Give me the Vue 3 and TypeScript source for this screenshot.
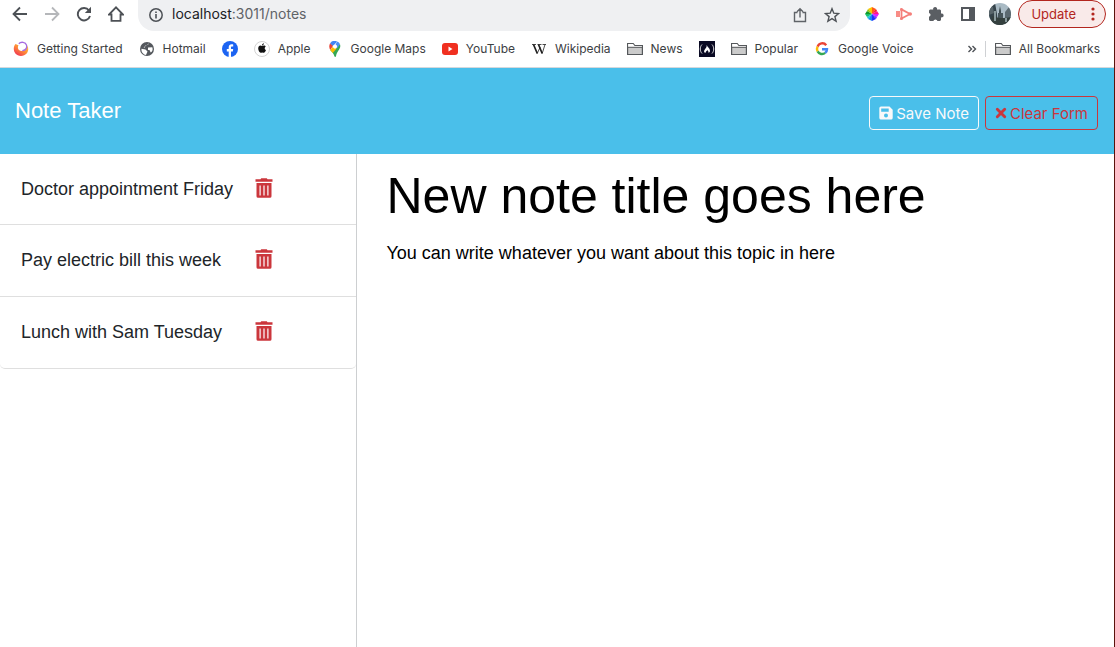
<script setup lang="ts">
import { ref } from 'vue'

interface Bookmark {
  icon: string
  label?: string
  name: string
}

interface Note {
  id: number
  title: string
}

const bookmarks: Bookmark[] = [
  { icon: 'firefox', label: 'Getting Started', name: 'Getting Started' },
  { icon: 'globe', label: 'Hotmail', name: 'Hotmail' },
  { icon: 'facebook', name: 'Facebook' },
  { icon: 'apple', label: 'Apple', name: 'Apple' },
  { icon: 'maps', label: 'Google Maps', name: 'Google Maps' },
  { icon: 'youtube', label: 'YouTube', name: 'YouTube' },
  { icon: 'wikipedia', label: 'Wikipedia', name: 'Wikipedia' },
  { icon: 'folder', label: 'News', name: 'News' },
  { icon: 'camp', name: 'freeCodeCamp' },
  { icon: 'folder', label: 'Popular', name: 'Popular' },
  { icon: 'google', label: 'Google Voice', name: 'Google Voice' },
]

const notes = ref<Note[]>([
  { id: 1, title: 'Doctor appointment Friday' },
  { id: 2, title: 'Pay electric bill this week' },
  { id: 3, title: 'Lunch with Sam Tuesday' },
])

const title = ref('New note title goes here')
const body = ref('You can write whatever you want about this topic in here')

let nextId = 4

function saveNote(): void {
  if (!title.value) return
  notes.value.push({ id: nextId++, title: title.value })
  clearForm()
}

function clearForm(): void {
  title.value = ''
  body.value = ''
}

function removeNote(id: number): void {
  notes.value = notes.value.filter((note) => note.id !== id)
}
</script>

<template>
  <div class="window">
    <div class="toolbar">
      <div class="nav">
        <button type="button" class="icon-button" aria-label="Back">
          <svg width="16" height="16" viewBox="0 0 16 16" fill="none" stroke="#4d5156" stroke-width="1.8"><path d="M15 8H2M8 1.5 1.5 8 8 14.500" /></svg>
        </button>
        <button type="button" class="icon-button" aria-label="Forward">
          <svg width="16" height="16" viewBox="0 0 16 16" fill="none" stroke="#b5b7ba" stroke-width="1.800"><path d="M1 8h13M8 1.500 14.500 8 8 14.500" /></svg>
        </button>
        <button type="button" class="icon-button" aria-label="Reload">
          <svg width="16" height="16" viewBox="0 0 16 16"><path d="M13 4.500A6.200 6.200 0 1 0 14 10" fill="none" stroke="#4d5156" stroke-width="1.900" /><path d="M15 .8v6.200H8.800z" fill="#4d5156" /></svg>
        </button>
        <button type="button" class="icon-button" aria-label="Home">
          <svg width="16" height="16" viewBox="0 0 16 16" fill="none" stroke="#4d5156" stroke-width="1.800"><path d="M1 8.500h2.500v6.400h9V8.500H15L8 1.400z" /></svg>
        </button>
      </div>
      <div class="address">
        <svg width="16" height="16" viewBox="0 0 16 16"><circle cx="8" cy="8" r="6.200" fill="none" stroke="#4d5156" stroke-width="1.500" /><path d="M7.200 7h1.600v4.500H7.200zM7.200 4.400h1.600V6H7.200z" fill="#4d5156" /></svg>
        <span class="url"><span class="host">localhost</span>:3011/notes</span>
        <button type="button" class="icon-button" aria-label="Share">
          <svg width="16" height="16" viewBox="0 0 16 16" fill="none" stroke="#5f6368" stroke-width="1.400"><path d="M5.500 5.500h-3v9h11v-9h-3M8 10.500V2M5 4.700l3-3 3 3" /></svg>
        </button>
        <button type="button" class="icon-button" aria-label="Bookmark this page">
          <svg width="16" height="16" viewBox="0 0 16 16" fill="none" stroke="#4d5156" stroke-width="1.400"><path d="m8 1.700 1.800 4.500 4.800.3-3.700 3.100 1.200 4.700L8 11.700l-4.100 2.600 1.200-4.700-3.700-3.100 4.800-.3z" /></svg>
        </button>
      </div>
      <div class="extensions">
        <button type="button" class="icon-button" aria-label="Color picker">
          <svg width="16" height="16" viewBox="0 0 16 16"><path d="M8 8V1l-4 2z" fill="#ffc400" /><path d="M8 8V1l4 2z" fill="#ff5a18" /><path d="m8 8 4-5 1 2z" fill="#f01830" /><path d="m8 8 5-3 2 3z" fill="#ff1888" /><path d="M8 8h7l-2 3z" fill="#e020ff" /><path d="m8 8 5 3-1 2z" fill="#8828ff" /><path d="m8 8 4 5-4 2z" fill="#2030ff" /><path d="M8 8v7l-4-2z" fill="#1888f0" /><path d="m8 8-4 5-1-2z" fill="#16c8d8" /><path d="m8 8-5 3-2-3z" fill="#18c070" /><path d="M8 8H1l2-3z" fill="#109828" /><path d="M8 8 3 5l1-2z" fill="#90c810" /></svg>
        </button>
        <button type="button" class="icon-button" aria-label="Screen recorder">
          <svg width="16" height="16" viewBox="0 0 16 16"><path d="M0 5h4v6H0z" fill="#f88c86" /><path d="M5.500 3.400 14 8l-8.500 4.600z" fill="none" stroke="#f47f7a" stroke-width="1.800" /><circle cx="5.500" cy="3.500" r="1.500" fill="#f47f7a" /><circle cx="5.500" cy="12.500" r="1.500" fill="#f47f7a" /><circle cx="14.200" cy="8" r="1.800" fill="#f47f7a" /></svg>
        </button>
        <button type="button" class="icon-button" aria-label="Extensions">
          <svg width="16" height="16" viewBox="0 0 16 16"><path d="M1 4.500 2 3.500h3.200a2 2 0 1 1 3.800 0h3l1 1v3a2 2 0 1 1 0 3.800V14l-1 1H9.500a2.200 2.200 0 0 0-4.200 0H2l-1-1v-3.200a2 2 0 0 0 0-3.900z" fill="#5a5e63" /></svg>
        </button>
        <button type="button" class="icon-button" aria-label="Side panel">
          <svg width="16" height="16" viewBox="0 0 16 16"><path fill-rule="evenodd" d="M1 1h14v14H1zM3 3v10h6V3z" fill="#54585d" /></svg>
        </button>
      </div>
      <button type="button" class="icon-button profile" aria-label="Profile">
        <svg width="22" height="22" viewBox="0 0 22 22"><defs><clipPath id="face"><circle cx="11" cy="11" r="11" /></clipPath></defs><g clip-path="url(#face)"><path d="M0 0h22v22H0z" fill="#a9bac4" /><path d="M0 0h6l2 11 1 11H0z" fill="#35434a" /><path d="M0 4h4l1 6-5 2z" fill="#59666b" /><path d="M10 22V8l1-5 1 5v14z" fill="#3d4b50" /><path d="M9 10h5v12H9z" fill="#47555a" /><path d="M16 9l4-5 2 1v17h-6z" fill="#5b6970" /><path d="M3 13c5 2 12 3 19 1v8H2z" fill="#34403e" /><path d="M5 8h2v10H5zM16 15h2v4h-2z" fill="#899a9d" /></g></svg>
      </button>
      <button type="button" class="update">
        <span>Update</span>
        <svg width="4" height="16" viewBox="0 0 4 16" fill="#b3261e"><circle cx="2" cy="3" r="1.600" /><circle cx="2" cy="8" r="1.600" /><circle cx="2" cy="13" r="1.600" /></svg>
      </button>
    </div>

    <nav class="bookmarks" aria-label="Bookmarks">
      <a v-for="mark in bookmarks" :key="mark.name" href="#" class="bookmark" :aria-label="mark.name">
        <svg v-if="mark.icon === 'firefox'" width="16" height="16" viewBox="0 0 16 16"><defs><linearGradient id="flame" x1="1" y1="0" x2="0.200" y2="1"><stop offset="0" stop-color="#ffd24a" /><stop offset="0.500" stop-color="#ff9036" /><stop offset="1" stop-color="#ef2f55" /></linearGradient></defs><path d="M2.500 3C-1 7 .8 15 8 15c6.500 0 8.800-6.500 6.200-10.500C14 8 11.500 10 9 10 5.500 10 4 7 5.500 4.200z" fill="url(#flame)" /><path d="M5.800 2.800C8 .3 12.500.9 13.600 4.300c.7 2.800-1.500 5.300-4.300 5.400" fill="none" stroke="#a56be0" stroke-width="1.300" /></svg>
        <svg v-else-if="mark.icon === 'globe'" width="16" height="16" viewBox="0 0 16 16"><circle cx="8" cy="8" r="7" fill="#54585d" /><path d="M2.500 7.800 6.500 8.500 8.500 10.500 7 14C4 13.500 2 10.800 2.500 7.800zM10 2.200c-.5 1.500-2 1.800-3.500 2L6 6.500H4.500M9 6.500l4.300-.3c1 2.300-.1 4.500-1.600 5.300L10.500 9H9z" fill="#fff" /></svg>
        <svg v-else-if="mark.icon === 'facebook'" width="16" height="16" viewBox="0 0 16 16"><circle cx="8" cy="8" r="8" fill="#1c64f2" /><path d="M6.700 16v-5.500H4.800V8h1.900V6.500C6.700 4 8 3.200 9.600 3.200c.9 0 1.600.2 1.600.2v2H10C9.200 5.400 9 5.900 9 6.600V8h2.200l-.4 2.500H9V16z" fill="#fff" /></svg>
        <svg v-else-if="mark.icon === 'apple'" width="16" height="16" viewBox="0 0 16 16"><circle cx="8" cy="8" r="7.500" fill="#fff" stroke="#d2d2d2" /><path d="M8.100 5c.8-.1 1.300-.6 2.300-.4.600.1 1 .4 1.300.8-1.500 1-1.300 3 .3 3.600-.5 1.500-1.400 2.800-2.200 2.800-.6 0-.9-.4-1.600-.4s-1 .4-1.600.4c-1.200 0-2.400-2.500-2.400-4.200C4.200 5.500 5.300 4.600 6.500 4.600c.7 0 1 .4 1.600.4zM8 4.400c0-1.100.8-2 1.900-2.100C10 3.500 9.100 4.400 8 4.400z" fill="#111" /></svg>
        <svg v-else-if="mark.icon === 'maps'" width="16" height="16" viewBox="0 0 16 16"><path d="M3 2.400A5.700 5.700 0 0 1 10 .4L6 5.500z" fill="#4285f4" /><path d="M3 2.400 6 5 3.200 9C2 6.600 2 4.200 3 2.400z" fill="#ea4335" /><path d="M3.200 9 13 3.200c1.500 4.500-3 6.300-4 12.100-.3.900-1.300.9-1.600 0C7 12.600 4.500 10.800 3.200 9z" fill="#34a853" /><path d="m3.200 9 3-3.700 3.500 2.200-4 4.500z" fill="#fbbc04" /><path d="M10 .4c1.500.5 2.600 1.500 3 2.800L10 7.500 8 5z" fill="#4a90f5" /><circle cx="8" cy="5.600" r="2.100" fill="#fff" /></svg>
        <svg v-else-if="mark.icon === 'youtube'" width="16" height="16" viewBox="0 0 16 16"><rect y="2" width="16" height="12" rx="3" fill="#f03020" /><path d="m6.500 5.500 4 2.500-4 2.500z" fill="#fff" /></svg>
        <svg v-else-if="mark.icon === 'wikipedia'" width="16" height="16" viewBox="0 0 16 16" fill="none" stroke="#202020"><path d="M1 3.500h4M6.500 3.500h4M11.500 3.500H15" stroke-width=".8" /><path d="m2.500 3.500 3.800 9M7.500 3.500l3.700 9" stroke-width="1.700" /><path d="m6.200 12.500 3-6.500M11.200 12.500l2.800-9" stroke-width=".8" /></svg>
        <svg v-else-if="mark.icon === 'camp'" width="16" height="16" viewBox="0 0 16 16"><path d="M0 0h16v16H0z" fill="#0a0a23" /><path d="M3 3.500c-2.300 2.500-2.300 6.500 0 9M13 3.500c2.300 2.500 2.300 6.500 0 9" fill="none" stroke="#ddd" /><path d="M7.700 4c.7 2.300 3.300 3.200 3.300 5.800 0 1-.6 1.900-1.400 2.200.3-1.300-.6-1.800-1.300-2.900-.4 1-1.600 1.500-1.900 2.900C5 11.600 4.700 10.400 5.500 9 6.500 7.500 8 6 7.700 4z" fill="#fff" /></svg>
        <svg v-else-if="mark.icon === 'google'" width="16" height="16" viewBox="0 0 16 16" fill="none" stroke-width="2.400"><path d="M12.200 4.200A5 5 0 0 0 3.600 5.600" stroke="#ea4335" /><path d="M3.600 5.600a5 5 0 0 0 0 4.800" stroke="#fbbc05" /><path d="M3.600 10.400a5 5 0 0 0 7.600 1.500" stroke="#34a853" /><path d="M11.200 11.900C12.500 10.800 13 9.300 13 8.200H8" stroke="#4285f4" /></svg>
        <svg v-else width="16" height="16" viewBox="0 0 16 16"><path d="M.6 2.500h5.600l1.600 2h7.600v9H.6z" fill="#cbcbcb" stroke="#55585b" stroke-width="1.200" /><path d="M1.200 3.100h4.700l1.500 2h7.400v1H1.200z" fill="#fff" /><path d="M1 6.300h14" stroke="#55585b" /></svg>
        <span v-if="mark.label">{{ mark.label }}</span>
      </a>
      <button type="button" class="icon-button more" aria-label="More bookmarks">
        <svg width="10" height="8" viewBox="0 0 10 8" fill="none" stroke="#4d5156" stroke-width="1.400"><path d="m1.500 1 3 3-3 3M5.500 1l3 3-3 3" /></svg>
      </button>
      <a href="#" class="bookmark all">
        <svg width="16" height="16" viewBox="0 0 16 16"><path d="M.6 2.500h5.600l1.600 2h7.600v9H.6z" fill="#cbcbcb" stroke="#55585b" stroke-width="1.200" /><path d="M1.200 3.100h4.700l1.500 2h7.400v1H1.200z" fill="#fff" /><path d="M1 6.300h14" stroke="#55585b" /></svg>
        <span>All Bookmarks</span>
      </a>
    </nav>

    <header class="app-header">
      <a href="#" class="brand">Note Taker</a>
      <div class="actions">
        <button type="button" class="btn save" @click="saveNote">
          <svg width="14" height="14" viewBox="0 0 14 14"><path fill-rule="evenodd" d="M2 .5h8.500L13.700 3.700V12A1.700 1.700 0 0 1 12 13.500H2A1.700 1.700 0 0 1 .3 12V2.200A1.700 1.700 0 0 1 2 .5zM2.200 2.500v3.200h7.500V2.500zM7 7.500a2 2 0 1 0 0 4 2 2 0 0 0 0-4z" fill="currentColor" /></svg>
          <span>Save Note</span>
        </button>
        <button type="button" class="btn clear" @click="clearForm">
          <svg width="12" height="14" viewBox="0 0 12 14" fill="none" stroke="currentColor" stroke-width="2.900" stroke-linecap="round"><path d="m2.300 3.300 7.400 7.400M9.700 3.300l-7.400 7.400" /></svg>
          <span>Clear Form</span>
        </button>
      </div>
    </header>

    <main class="content">
      <aside class="sidebar">
        <ul class="notes">
          <li v-for="note in notes" :key="note.id" class="note">
            <span class="note-title">{{ note.title }}</span>
            <button type="button" class="icon-button delete" :aria-label="`Delete ${note.title}`" @click="removeNote(note.id)">
              <svg width="18" height="20" viewBox="0 0 18 20"><path d="M.5 1.300h5l.7-1.100h5.600l.7 1.100h5v2.400H.5z" fill="#cb363c" /><path fill-rule="evenodd" d="M1.500 4.900h15v13.300a1.600 1.600 0 0 1-1.600 1.600H3.100a1.600 1.600 0 0 1-1.600-1.600zM4.500 7.500v10h1.200v-10zM8.400 7.500v10h1.200v-10zM12.300 7.500v10h1.200v-10z" fill="#cb363c" /></svg>
            </button>
          </li>
        </ul>
      </aside>
      <section class="editor">
        <input v-model="title" type="text" class="title-input" aria-label="Note title" />
        <textarea v-model="body" class="body-input" aria-label="Note text"></textarea>
      </section>
    </main>
  </div>
</template>

<style>
html,
body {
  background: #fff;
}
</style>

<style scoped>
* {
  box-sizing: border-box;
}

.window {
  display: flex;
  flex-direction: column;
  min-height: 100vh;
  border-right: 1px solid #5a120c;
  background: #fff;
  color: #212529;
  font-family: Inter, "Liberation Sans", sans-serif;
}

button,
input,
textarea {
  font-family: inherit;
}

svg {
  display: block;
  flex: none;
}

.icon-button {
  padding: 0;
  border: 0;
  background: none;
}

.toolbar {
  display: flex;
  align-items: flex-start;
  height: 31px;
  padding: 0 8px 0 12px;
}

.nav {
  display: flex;
  gap: 16px;
  padding: 6px 14px 0 0;
}

.address {
  display: flex;
  flex: 1;
  align-items: center;
  gap: 16px;
  height: 31px;
  padding: 0 10px 2px;
  border-radius: 0 0 16px 16px;
  background: #eff0f2;
}

.url {
  flex: 1;
  margin-left: -8px;
  padding-bottom: 2px;
  color: #5f6368;
  font-size: 14px;
}

.host {
  color: #202124;
}

.extensions {
  display: flex;
  gap: 16px;
  padding: 6px 13px 0 14px;
}

.profile {
  margin: 3px 7px 0 0;
}

.update {
  display: flex;
  align-items: center;
  gap: 15px;
  height: 28px;
  padding: 0 10px 0 12px;
  border: 1px solid #b3261e;
  border-radius: 14px;
  background: #f9eae9;
  color: #b3261e;
  font-size: 13px;
}

.bookmarks {
  display: flex;
  align-items: center;
  gap: 16px;
  height: 37px;
  padding: 0 14px 0 13px;
  border-bottom: 1px solid #d5d8dc;
}

.bookmark {
  display: flex;
  align-items: center;
  gap: 8px;
  color: #3c4043;
  font-size: 12px;
  text-decoration: none;
  white-space: nowrap;
}

.bookmark span {
  padding-bottom: 1px;
}

.more {
  margin-left: auto;
  margin-right: -8px;
}

.all {
  padding-left: 9px;
  border-left: 1px solid #cfd1d4;
}

.app-header {
  display: flex;
  align-items: center;
  justify-content: space-between;
  height: 86px;
  padding: 4px 16px 0 15px;
  background: #4abfea;
}

.brand,
.note,
.title-input,
.body-input {
  font-family: "Liberation Sans", Arial, sans-serif;
}

.brand {
  padding-bottom: 5px;
  color: #fff;
  font-size: 22px;
  line-height: 32px;
  text-decoration: none;
}

.actions {
  display: flex;
  gap: 6px;
}

.btn {
  display: flex;
  align-items: center;
  gap: 3px;
  height: 34px;
  padding: 0 9px;
  border: 1px solid;
  border-radius: 4px;
  background: none;
  font-size: 15px;
}

.save {
  color: #f8f9fa;
}

.clear {
  color: #cb363c;
}

.content {
  display: flex;
  flex: 1;
}

.sidebar {
  box-sizing: content-box;
  flex: 0 0 32%;
  border-right: 1px solid #cdcfd1;
}

.notes {
  margin: 0;
  padding: 0;
  border-bottom: 1px solid #dfdfdf;
  border-radius: 0 0 5px 5px;
  list-style: none;
}

.note {
  display: grid;
  grid-template-columns: 234px auto;
  align-items: center;
  justify-content: start;
  height: 70px;
  padding: 0 21px;
  font-size: 18px;
}

.note + .note {
  height: 72px;
  border-top: 1px solid #dfdfdf;
}

.delete {
  padding-bottom: 3px;
}

.editor {
  display: flex;
  flex: 1;
  flex-direction: column;
  padding: 16px 29px;
}

.title-input {
  width: 100%;
  height: 53px;
  padding: 0;
  border: 0;
  outline: 0;
  background: none;
  color: #000;
  font-size: 50px;
  line-height: 55px;
}

.body-input {
  flex: 1;
  margin-top: 17px;
  padding: 0;
  border: 0;
  outline: 0;
  background: none;
  color: #000;
  font-size: 18px;
  line-height: 27px;
  resize: none;
}
</style>
